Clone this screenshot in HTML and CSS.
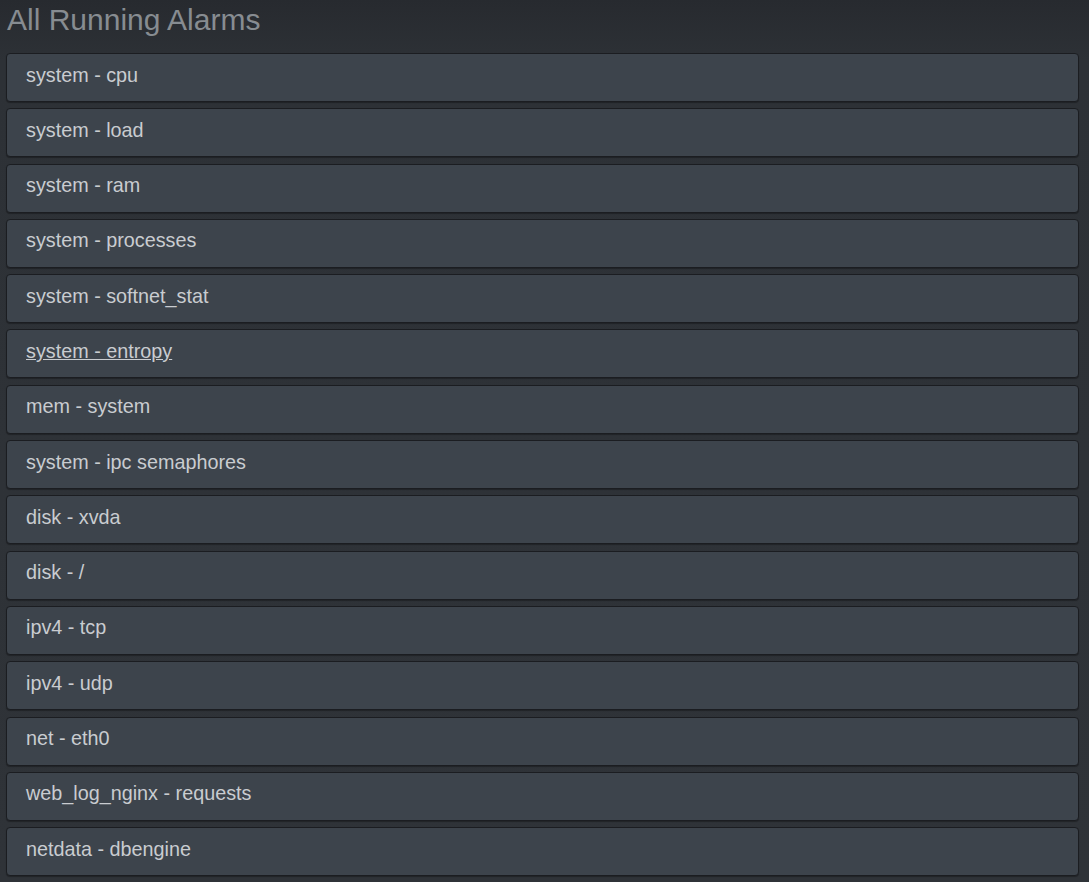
FILE: index.html
```html
<!DOCTYPE html>
<html>
<head>
<meta charset="utf-8">
<title>All Running Alarms</title>
<link rel="stylesheet" href="styles.css">
</head>
<body>
<div class="page">
  <h3 class="title">All Running Alarms</h3>
  <div class="panel-group">
    <div class="panel"><a class="panel-title">system - cpu</a></div>
    <div class="panel"><a class="panel-title">system - load</a></div>
    <div class="panel"><a class="panel-title">system - ram</a></div>
    <div class="panel"><a class="panel-title">system - processes</a></div>
    <div class="panel"><a class="panel-title">system - softnet_stat</a></div>
    <div class="panel"><a class="panel-title hover">system - entropy</a></div>
    <div class="panel"><a class="panel-title">mem - system</a></div>
    <div class="panel"><a class="panel-title">system - ipc semaphores</a></div>
    <div class="panel"><a class="panel-title">disk - xvda</a></div>
    <div class="panel"><a class="panel-title">disk - /</a></div>
    <div class="panel"><a class="panel-title">ipv4 - tcp</a></div>
    <div class="panel"><a class="panel-title">ipv4 - udp</a></div>
    <div class="panel"><a class="panel-title">net - eth0</a></div>
    <div class="panel"><a class="panel-title">web_log_nginx - requests</a></div>
    <div class="panel"><a class="panel-title">netdata - dbengine</a></div>
  </div>
</div>
</body>
</html>
```

FILE: styles.css
```css
html, body {
  margin: 0;
  padding: 0;
  height: 100%;
  overflow: hidden;
}
body {
  background: #2e3237;
  font-family: "Liberation Sans", Arial, sans-serif;
}
.page {
  background: linear-gradient(to bottom, #272a2f 0px, #2d3136 60px, #2f3338 100%);
  min-height: 100%;
  padding: 3px 10px 0 6px;
  box-sizing: border-box;
}
.title {
  margin: 0 0 17px 1px;
  font-size: 30px;
  line-height: 33px;
  font-weight: 400;
  color: #878c91;
}
.panel-group {
  display: flex;
  flex-direction: column;
  gap: 6.3px;
}
.panel {
  height: 49px;
  box-sizing: border-box;
  background: #3d444c;
  border: 1px solid #1b1d21;
  border-radius: 4px;
  box-shadow: 0 1px 1px rgba(0,0,0,0.3);
  display: flex;
  align-items: center;
  padding: 0 19px;
}
.panel-title {
  font-size: 19.8px;
  color: #c9ccd0;
  text-decoration: none;
  line-height: 22px;
  margin-top: -6px;
}
.panel-title.hover {
  text-decoration: underline;
}
```
